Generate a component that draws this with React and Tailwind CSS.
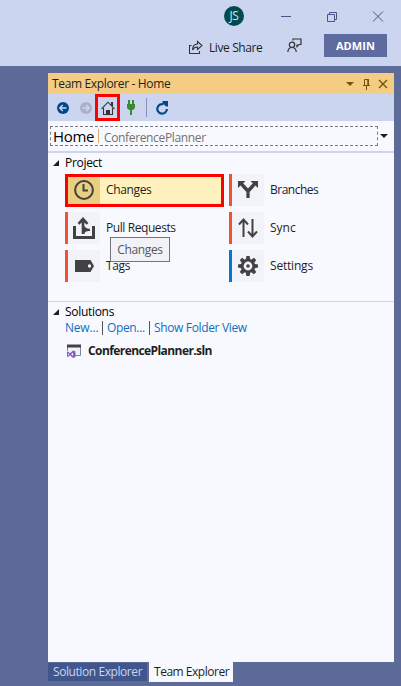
import React from 'react';

function Clock() {
  return (
    <svg width="32" height="32" viewBox="0 0 32 32" fill="none" stroke="#424242">
      <circle cx="16" cy="16" r="8.9" strokeWidth="2" />
      <path d="M15.500 10v6.500H20" strokeWidth="2" />
    </svg>
  );
}

function Branches() {
  return (
    <svg width="32" height="32" viewBox="0 0 32 32" fill="#424242">
      <path d="M6 7h7.500l-2.300 2.300 4.800 5.200 4.800-5.200L18.500 7H26v7l-2.500-2.500-5.900 6.500V24h-3.200v-6L8.500 11.500 6 14z" />
    </svg>
  );
}

function PullRequest() {
  return (
    <svg width="32" height="32" viewBox="0 0 32 32" fill="none" stroke="#424242">
      <path d="M6.500 14v11.500h19V14" strokeWidth="3" />
      <path d="M15 22V8M10.500 11.800 15 7l4.500 4.800" strokeWidth="2.600" />
      <path d="M14 22h2.300c.5-2 1.500-2.800 5.700-3v-2.200c-2.500 0-4-.5-5.700-2.800H14z" fill="#424242" stroke="none" />
    </svg>
  );
}

function Sync() {
  return (
    <svg width="32" height="32" viewBox="0 0 32 32" fill="none" stroke="#424242" strokeWidth="2">
      <path d="M11.500 25V8M7 12.500 11.500 7.500 16 12.500M20.500 7v17M16 19.500l4.500 5 4.500-5" />
    </svg>
  );
}

function Tag() {
  return (
    <svg width="32" height="32" viewBox="0 0 32 32" fill="#424242">
      <path fillRule="evenodd" d="M7 10h15.500l3.500 6-3.500 6H7zM21.500 14.300a1.700 1.700 0 1 0 0 3.400 1.700 1.700 0 0 0 0-3.400z" />
    </svg>
  );
}

function Gear() {
  return (
    <svg width="32" height="32" viewBox="0 0 32 32">
      <g fill="#424242">
        {[0, 45, 90, 135, 180, 225, 270, 315].map((a) => (
          <path key={a} d="M13.700 10 14.400 6h3.200l.7 4z" transform={`rotate(${a} 16 16)`} />
        ))}
      </g>
      <circle cx="16" cy="16" r="5.800" fill="none" stroke="#424242" strokeWidth="2.800" />
      <circle cx="16" cy="16" r="1.800" fill="#424242" />
    </svg>
  );
}

function Tile({ icon, label, stripe = 'bg-[#f05033]', tracking = 'tracking-[-0.35px]' }) {
  return (
    <div className="flex h-8 items-center">
      <div className={`h-8 w-[3px] ${stripe}`} />
      <div className="h-8 w-8 bg-[#f2f3f9]">{icon}</div>
      <span className={`ml-[6px] ${tracking}`}>{label}</span>
    </div>
  );
}

function Heading({ children }) {
  return (
    <div className="flex h-[18px] items-center pl-[5px] text-black">
      <svg width="6" height="6" viewBox="0 0 6 6"><path d="M6 0v6H0z" fill="#1e1e1e" /></svg>
      <span className="ml-[6px] font-medium tracking-[-0.3px]">{children}</span>
    </div>
  );
}

function Header() {
  return (
    <header className="h-[66px] bg-[#ccd5f0]">
      <div className="flex h-[32px] items-center pl-[224px]">
        <div className="flex h-5 w-5 items-center justify-center rounded-full bg-[#004b50] text-[12px] text-[#d5e5e7]">JS</div>
        <svg className="ml-[37px]" width="107" height="12" viewBox="0 0 107 12" fill="none" stroke="#4a5587">
          <path d="M0 6.500h10M46.500 4.500h7v7h-7zM48.500 4.500v-2h7v7h-2M92 1.500l10 10M102 1.500l-10 10" />
        </svg>
      </div>
      <div className="flex h-[27px] items-center pl-[189px] text-[#1e1e1e]">
        <svg className="mt-[3px]" width="14" height="14" viewBox="0 0 14 14" fill="none" stroke="#333" strokeWidth="1.100">
          <path d="M2.500 5.500h-2v8h10V11" />
          <path d="M8.500 1.500 13 5.500l-4.500 4V7C6 7 4.500 8 3.500 10c0-3.500 2-5.800 5-6z" />
        </svg>
        <span className="ml-[6px] mt-[4px] w-[54px] whitespace-nowrap text-[12px] tracking-[-0.400px]">Live Share</span>
        <svg className="ml-[24px]" width="15" height="15" viewBox="0 0 15 15" fill="none" stroke="#333" strokeWidth="1.200">
          <path d="M6 2.500V1h8v5.500h-2l-2 2V6.500" />
          <circle cx="5" cy="6.800" r="2.700" />
          <path d="M.8 14c.3-3 2-4.500 4.200-4.500S9 11 9.300 14" />
        </svg>
        <div className="ml-[22px] flex h-[23px] w-[63px] items-center justify-center bg-[#5d6b9f] text-[11px] font-bold tracking-[0.1px] text-white">ADMIN</div>
      </div>
    </header>
  );
}

function Toolbar() {
  return (
    <div className="flex h-[27px] items-center bg-[#ccd5f0] pl-[9px]">
      <svg width="12" height="12" viewBox="0 0 12 12"><circle cx="6" cy="6" r="6" fill="#00488a" /><path d="M9.500 6H3M5.800 3 2.800 6l3 3" fill="none" stroke="#ccd5f0" strokeWidth="1.500" /></svg>
      <svg className="ml-[11px]" width="12" height="12" viewBox="0 0 12 12"><circle cx="6" cy="6" r="6" fill="#aab1c6" /><path d="M2.500 6H9M6.200 3l3 3-3 3" fill="none" stroke="#ccd5f0" strokeWidth="1.500" /></svg>
      <div className="ml-[3px] flex h-[27px] w-[25px] items-center justify-center border-[3px] border-[#ff0000]">
        <svg width="16" height="16" viewBox="0 0 16 16" fill="none" stroke="#333">
          <path d="M1.500 8.800 8 2.200l6.500 6.600M3.500 8v6.500h9V8M11.500 5V2.500h1v3.500" strokeWidth="1.100" />
          <path d="M6 15v-5h4v5z" fill="#333" stroke="none" />
        </svg>
      </div>
      <svg className="ml-[6px]" width="10" height="15" viewBox="0 0 10 15" fill="#388a34"><path d="M2 0h2v4h2V0h2v4h1v4L7 10H6v5H4v-5H3L1 8V4h1z" /></svg>
      <div className="ml-[10px] h-[19px] w-px bg-[#8591b5]" />
      <svg className="ml-[9px]" width="13" height="14" viewBox="0 0 13 14"><path d="M7.500 3.300A4.800 4.800 0 1 0 10.900 8" fill="none" stroke="#00488a" strokeWidth="2.200" /><path d="M6.500 0H12v5.500H10L6.500 2z" fill="#00488a" /></svg>
    </div>
  );
}

export default function App() {
  return (
    <div className="h-[686px] w-[401px] overflow-hidden bg-[#5d6b99] font-['Open_Sans','Noto_Sans',sans-serif] text-[12px] leading-[16px] tracking-[-0.35px] text-[#1e1e1e]">
      <Header />
      <main className="ml-[48px] mt-[7px] h-[589px] w-[346px] bg-[#f8f9ff]">
        <div className="flex h-[21px] items-center bg-[#f5cc84] pl-1">
          <span className="w-[293px]">Team Explorer - Home</span>
          <svg width="44" height="14" viewBox="0 0 44 14" fill="none" stroke="#775500">
            <path d="M1 5h8L5 9z" fill="#775500" stroke="none" />
            <path d="M19.500 8V2.500h4V8M18 8.500h7M21.500 9v4" />
            <path d="M23 2v6" strokeWidth="1.500" />
            <path d="m34 3 8 8M42 3l-8 8" strokeWidth="1.400" />
          </svg>
        </div>
        <Toolbar />
        <div className="flex h-[30px] items-center pl-[2px]">
          <div className="flex h-[20px] w-[328px] items-center border border-dashed border-[#777986] pl-[2px]">
            <span className="w-[45px] text-[15px] tracking-[-0.3px] text-black">Home</span>
            <div className="h-[14px] w-px bg-[#d9a96f]" />
            <span className="ml-[5px] mt-[3px] text-[#717171]">ConferencePlanner</span>
          </div>
          <svg className="ml-[2px]" width="8" height="4" viewBox="0 0 8 4"><path d="M0 0h8L4 4z" fill="#1e1e1e" /></svg>
        </div>
        <div className="h-[2px] bg-[#ccd5f0]" />
        <section className="relative h-[148px] pt-px">
          <Heading>Project</Heading>
          <div className="ml-[17px] mt-[2px] grid w-[324px] grid-cols-[164px_160px] gap-y-[6px]">
            <div className="-mb-px flex h-[33px] w-[159px] items-center bg-[#fff2be] outline-[3px] -outline-offset-[3px] outline-[#ff0000]">
              <div className="ml-[3px] h-[27px] w-8 overflow-hidden bg-[#ebcf80]"><div className="-mt-[3px]"><Clock /></div></div>
              <span className="mb-px ml-[6px]">Changes</span>
            </div>
            <Tile icon={<Branches />} label="Branches" tracking="tracking-[-0.5px]" />
            <Tile icon={<PullRequest />} label="Pull Requests" tracking="tracking-[-0.42px]" />
            <Tile icon={<Sync />} label="Sync" tracking="tracking-[0px]" />
            <Tile icon={<Tag />} label="Tags" />
            <Tile icon={<Gear />} label="Settings" stripe="bg-[#007acc]" tracking="tracking-[-0.2px]" />
          </div>
          <div className="absolute left-[62px] top-[84px] flex h-[25px] w-[60px] items-center justify-center border border-[#767676] bg-[#f1f2f7] text-[#575757]">Changes</div>
        </section>
        <div className="h-px bg-[#ccd5f0]" />
        <section className="pt-px">
          <Heading>Solutions</Heading>
          <div className="flex h-[14px] items-center pl-[17px] text-[#0e70c0]">
            <span className="w-[37px] tracking-[-0.2px]">New...</span>
            <div className="mr-[4px] h-[14px] w-px bg-[#555]" />
            <span className="w-[42px]">Open...</span>
            <div className="mr-[4px] h-[14px] w-px bg-[#555]" />
            <span>Show Folder View</span>
          </div>
          <div className="mt-[7px] flex h-[18px] items-center pl-[18px]">
            <svg width="16" height="16" viewBox="0 0 16 16" fill="none">
              <path d="M1.500 8V2.500h13v10H9" fill="#f1f1f6" stroke="#888" />
              <path d="M1 1.500h14v3H1z" fill="#424242" />
              <path fillRule="evenodd" d="M1 9l1-.5 2 1.700L7 7.500l2.500 1v5.500L7 15l-3-2.700L2 14l-1-.5zM2 10.200v2.200l1.100-1.100zM7 9.700 5.200 11.300 7 12.900z" fill="#865fc5" />
            </svg>
            <span className="ml-[6px] font-bold tracking-[-0.580px]">ConferencePlanner.sln</span>
          </div>
        </section>
      </main>
      <footer className="ml-[48px] flex h-5">
        <div className="mt-px flex h-[18px] w-[99px] items-center bg-[#40568d] pl-[5px] tracking-[-0.42px] text-[#ccd5f0]">Solution Explorer</div>
        <div className="ml-[2px] flex h-5 w-[84px] items-center bg-[#f8f9ff] pl-[5px] tracking-[-0.48px]">Team Explorer</div>
      </footer>
    </div>
  );
}
